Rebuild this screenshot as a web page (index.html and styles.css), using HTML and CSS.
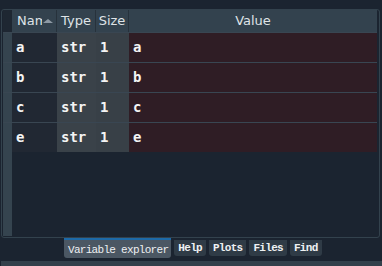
FILE: index.html
```html
<!DOCTYPE html>
<html lang="en">
<head>
    <meta charset="UTF-8">
    <title>Variable explorer</title>
    <link rel="stylesheet" href="styles.css">
</head>
<body>
    <div class="frame">
        <div class="grid head">
            <div class="corner"></div>
            <div class="hcell name-h"><span class="clip">Name</span><span class="sort"></span></div>
            <div class="hcell">Type</div>
            <div class="hcell">Size</div>
            <div class="hcell value-h">Value</div>
        </div>
        <div class="grid row">
            <div class="strip"></div>
            <div class="cell c-name">a</div>
            <div class="cell c-type">str</div>
            <div class="cell c-size">1</div>
            <div class="cell c-value">a</div>
        </div>
        <div class="grid row">
            <div class="strip"></div>
            <div class="cell c-name">b</div>
            <div class="cell c-type">str</div>
            <div class="cell c-size">1</div>
            <div class="cell c-value">b</div>
        </div>
        <div class="grid row">
            <div class="strip"></div>
            <div class="cell c-name">c</div>
            <div class="cell c-type">str</div>
            <div class="cell c-size">1</div>
            <div class="cell c-value">c</div>
        </div>
        <div class="grid row">
            <div class="strip"></div>
            <div class="cell c-name">e</div>
            <div class="cell c-type">str</div>
            <div class="cell c-size">1</div>
            <div class="cell c-value">e</div>
        </div>
        <div class="filler"><div class="strip"></div></div>
    </div>
    <div class="tabs">
        <div class="tab active">Variable explorer</div>
        <div class="tab">Help</div>
        <div class="tab">Plots</div>
        <div class="tab">Files</div>
        <div class="tab">Find</div>
    </div>
    <div class="statusbar"></div>
</body>
</html>
```

FILE: styles.css
```css
body {
    margin: 0;
    background: #1b2430;
    width: 382px;
    height: 266px;
    overflow: hidden;
}
.frame {
    margin: 9px 2px 0 1px;
    height: 226px;
    border: 1px solid #33424d;
    border-radius: 3px;
    padding: 0 1px 1px 1px;
    display: flex;
    flex-direction: column;
}
.grid {
    display: grid;
    grid-template-columns: 9px 45px 39px 33px 1fr;
}
.head {
    height: 22px;
    margin-right: 1px;
}
.corner {
    background: #1e2732;
}
.hcell {
    background: #33424e;
    color: #dfe3e7;
    font-family: "DejaVu Sans", sans-serif;
    font-size: 13px;
    line-height: 22px;
    text-align: center;
    border-right: 1px solid #27323c;
    white-space: nowrap;
    overflow: hidden;
}
.value-h {
    border-right: none;
}
.name-h {
    text-align: left;
    padding-left: 5px;
    display: flex;
    align-items: center;
}
.clip {
    width: 25px;
    overflow: hidden;
    flex: none;
}
.sort {
    flex: none;
    width: 0;
    height: 0;
    margin-left: 1px;
    border-left: 5px solid transparent;
    border-right: 5px solid transparent;
    border-bottom: 4px solid #8d99a4;
}
.row {
    height: 29px;
    border-top: 1px solid #394652;
    margin-right: 1px;
}
.row:last-of-type {
    border-bottom: 1px solid #394652;
}
.strip {
    background: #35444f;
    width: 9px;
}
.cell {
    color: #f4f4f4;
    font-family: "DejaVu Sans Mono", monospace;
    font-weight: bold;
    font-size: 14px;
    line-height: 29px;
    padding-left: 4px;
}
.c-name { background: #212833; }
.c-type { background: #3a4249; }
.c-size { background: #384047; }
.c-value { background: #2f1d25; }
.filler {
    flex: 1;
    display: flex;
}
.tabs {
    display: flex;
    align-items: flex-start;
    gap: 3px;
    margin: 0 0 0 64px;
    height: 23px;
}
.tab {
    background: #2f3b46;
    color: #eef0f2;
    font-family: "Liberation Mono", monospace;
    font-weight: bold;
    font-size: 11px;
    letter-spacing: -0.7px;
    line-height: 16px;
    height: 16px;
    margin-top: 2px;
    padding: 0 4px 0 4px;
    border-radius: 0 0 3px 3px;
}
.tab.active {
    margin-top: 0;
    background: #4b5763;
    font-weight: normal;
    border-top: 2px solid #1d6aa8;
    line-height: 20px;
    height: 18px;
    padding: 0 3px 0 4px;
}
.statusbar {
    margin: 0 0 0 1px;
    height: 6px;
    background: #33404b;
}
```
